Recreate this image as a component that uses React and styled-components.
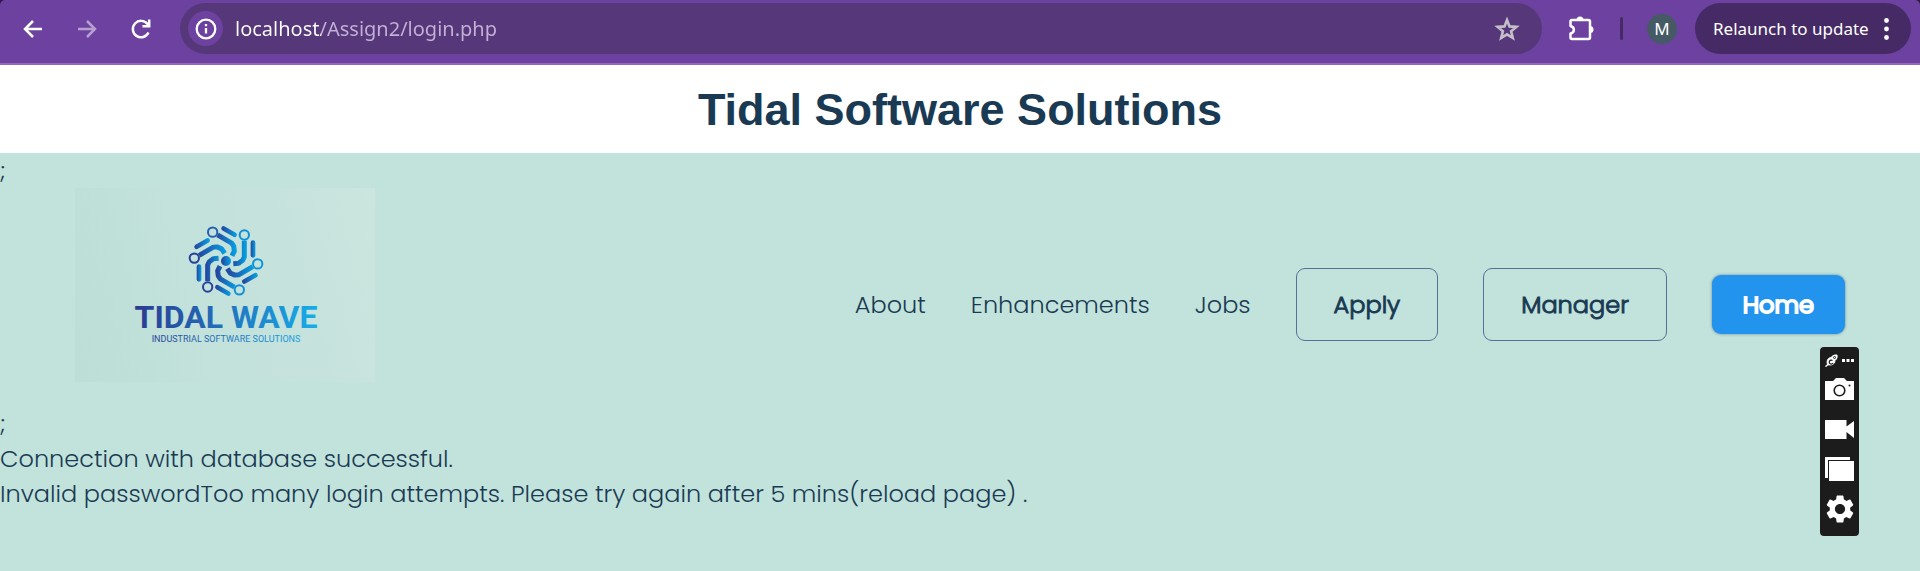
import React from "react";
import styled, { createGlobalStyle } from "styled-components";

const GlobalStyle = createGlobalStyle`
  * { box-sizing: border-box; }
  html, body { margin: 0; }
  body {
    min-height: 100vh;
    background: #c2e3db;
    color: #1a3a54;
    font-family: Poppins, Inter, "Liberation Sans", sans-serif;
    font-size: 24px;
    font-weight: 300;
    line-height: 35px;
  }
  button { font: inherit; color: inherit; border: 0; padding: 0; background: none; cursor: pointer; }
  svg { display: block; }
`;

const ToolbarBack = styled.div`
  background: #2b1a40;
`;

const Toolbar = styled.div`
  display: flex;
  align-items: flex-start;
  height: 65px;
  padding: 3px 9px 0 8px;
  background: #6d419f;
  border-bottom: 2px solid #9069b8;
  border-radius: 5px 5px 0 0;
  color: #fff;
  font-family: "Segoe UI", "Noto Sans", sans-serif;
  font-weight: 400;
`;

const ToolButton = styled.button`
  display: grid;
  place-items: center;
  flex: none;
  width: ${(p) => p.$width || 54}px;
  height: 51px;
  opacity: ${(p) => (p.$dim ? 0.5 : 1)};
`;

const AddressBar = styled.div`
  display: flex;
  align-items: center;
  flex: 1;
  height: 51px;
  margin-left: 14px;
  padding: 0 22px 0 8px;
  border-radius: 26px;
  background: #56387a;
`;

const SiteInfo = styled.button`
  display: grid;
  place-items: center;
  flex: none;
  width: 35px;
  height: 35px;
  margin-right: 12px;
  border-radius: 50%;
  background: #6d419f;
`;

const AddressInput = styled.input`
  flex: 1;
  min-width: 0;
  height: 32px;
  padding: 0;
  border: 0;
  outline: 0;
  font: 400 20px/32px "Segoe UI", "Noto Sans", sans-serif;
  color: transparent;
  background: linear-gradient(90deg, #fff 86px, #c3b2d6 86px);
  background-clip: text;
  -webkit-background-clip: text;
`;

const Divider = styled.span`
  width: 3px;
  height: 23px;
  margin: 14px 24px 0 0;
  border-radius: 2px;
  background: #462a66;
`;

const Avatar = styled.button`
  width: 30px;
  height: 30px;
  margin: 11px 18px 0 0;
  && {
    border-radius: 50%;
    background: #455a64;
    font-size: 17px;
    line-height: 30px;
  }
`;

const Relaunch = styled.button`
  && {
    display: flex;
    align-items: center;
    justify-content: space-between;
    width: 216px;
    height: 51px;
    padding: 0 22px 0 18px;
    border-radius: 26px;
    background: #462a66;
    font-size: 17px;
    white-space: nowrap;
  }
`;

const TitleBar = styled.header`
  display: grid;
  place-items: center;
  height: 88px;
  padding-top: 2px;
  background: #fff;
`;

const Title = styled.h1`
  margin: 0;
  font: 700 45px/52px Arial, "Liberation Sans", sans-serif;
`;

const SiteHeader = styled.div`
  display: flex;
  justify-content: space-between;
  height: 218px;
  padding: 0 75px;
`;

const LogoLink = styled.a`
  flex: none;
  width: 300px;
  height: 194px;
  background: linear-gradient(75deg, #bcded6 0%, #c2e2db 40%, #c6e2dc 70%, #cbe6df 100%);
`;

const Nav = styled.nav`
  display: flex;
  align-items: center;
  gap: 45px;
  padding-top: 14px;
`;

const NavLink = styled.a`
  color: inherit;
  text-decoration: none;
`;

const NavBox = styled(NavLink)`
  padding: 18px 37px;
  border: 1px solid #587099;
  border-radius: 9px;
  -webkit-text-stroke: 1px currentColor;
`;

const HomeBox = styled(NavLink)`
  padding: 12px 31px;
  border-radius: 9px;
  background: #2394ee;
  box-shadow: 0 0 3px rgba(40, 70, 110, 0.6);
  color: #fff;
  -webkit-text-stroke: 2px currentColor;
`;

const Line = styled.p`
  margin: 0;
`;

const Recorder = styled.aside`
  position: fixed;
  top: 347px;
  right: 61px;
  display: flex;
  flex-direction: column;
  align-items: center;
  width: 39px;
  height: 189px;
  padding: 4px 0;
  border-radius: 4px;
  background: #1c1c1c;
  color: #fff;
`;

const RecorderTop = styled.div`
  display: flex;
  align-items: center;
  gap: 4px;
  height: 18px;
`;

const RecorderButton = styled.button`
  display: grid;
  place-items: center;
  width: 39px;
  height: 40px;
`;

const turn = ([x, y], k) => {
  const a = (k * Math.PI) / 3;
  return [x * Math.cos(a) - y * Math.sin(a), x * Math.sin(a) + y * Math.cos(a)];
};

const Swirl = () => (
  <g transform="translate(151 73) scale(.3333)" fill="none" strokeLinejoin="round">
    {[0, 1, 2, 3, 4, 5].map((k) => {
      const ring = turn([55, -78], k);
      const arm = [[55, -61], [55, -12], [50, -2], [38, 7], [22, 8]].map((p) => turn(p, k));
      const bar = [[81, -55], [81, -17]].map((p) => turn(p, k));
      const shades = [arm, bar].map((pts) => pts.map((p) => p[0]));
      return (
        <g key={k}>
          {shades.map((xs, i) => (
            <linearGradient
              key={i}
              id={`shade${k}-${i}`}
              gradientUnits="userSpaceOnUse"
              x1={Math.min(...xs) - 8}
              x2={Math.max(...xs) + 8}
              y1="0"
              y2="0"
            >
              <stop offset="0" stopColor="#27409a" />
              <stop offset="1" stopColor="#05a4e6" />
            </linearGradient>
          ))}
          <path d={`M${arm.map((p) => p.join(" ")).join("L")}`} stroke={`url(#shade${k}-0)`} strokeWidth="15" />
          <path
            d={`M${bar.map((p) => p.join(" ")).join("L")}`}
            stroke={`url(#shade${k}-1)`}
            strokeWidth="14"
            strokeLinecap="round"
          />
          <circle
            cx={ring[0]}
            cy={ring[1]}
            r="14"
            strokeWidth="6"
            stroke={["#0d8fd8", "#0b96dc", "#1590d8", "#27409a", "#27409a", "#2560b0"][k]}
          />
        </g>
      );
    })}
    <circle r="15" fill="url(#core)" />
  </g>
);

const Logo = () => (
  <svg width="300" height="194" viewBox="0 0 300 194" role="img" aria-label="Tidal Wave">
    <defs>
      <linearGradient id="word" gradientUnits="userSpaceOnUse" x1="58" x2="244" y1="0" y2="0">
        <stop offset="0" stopColor="#2b3990" />
        <stop offset="1" stopColor="#17aeea" />
      </linearGradient>
      <linearGradient id="core">
        <stop offset="0" stopColor="#27409a" />
        <stop offset="1" stopColor="#05a4e6" />
      </linearGradient>
    </defs>
    <Swirl />
    <text
      x="151"
      y="140"
      textAnchor="middle"
      fontFamily="Roboto, sans-serif"
      fontSize="32"
      fontWeight="700"
      fill="url(#word)"
    >
      TIDAL WAVE
    </text>
    <text
      x="151"
      y="154"
      textAnchor="middle"
      fontFamily="Roboto, sans-serif"
      fontSize="9"
      fontWeight="400"
      fill="url(#word)"
    >
      INDUSTRIAL SOFTWARE SOLUTIONS
    </text>
  </svg>
);

const Arrow = ({ flip }) => (
  <svg width="20" height="20" viewBox="0 0 20 20" fill="none" stroke="currentColor" strokeWidth="2.5">
    <path d={flip ? "M1 10H18M10 2l8 8-8 8" : "M19 10H2M10 2l-8 8 8 8"} />
  </svg>
);

export default function App() {
  return (
    <>
      <GlobalStyle />
      <ToolbarBack>
        <Toolbar>
          <ToolButton $width={50} aria-label="Back"><Arrow /></ToolButton>
          <ToolButton $width={58} $dim aria-label="Forward"><Arrow flip /></ToolButton>
          <ToolButton $width={50} aria-label="Reload">
            <svg width="22" height="22" viewBox="0 0 22 22" fill="none" stroke="currentColor" strokeWidth="2.5">
              <path d="M18.5 14.5A8.2 8.2 0 1 1 17.5 6L19 8M19.2 1.5V8.2H12.5" />
            </svg>
          </ToolButton>
          <AddressBar>
            <SiteInfo aria-label="Site information">
              <svg width="22" height="22" viewBox="0 0 22 22" fill="none" stroke="#fff">
                <circle cx="11" cy="11" r="9.3" strokeWidth="2.3" />
                <path d="M11 10v5.5M11 6v2.2" strokeWidth="2.3" />
              </svg>
            </SiteInfo>
            <AddressInput aria-label="Address" defaultValue="localhost/Assign2/login.php" />
            <button aria-label="Bookmark this page">
              <svg width="26" height="26" viewBox="0 0 26 26" fill="none" stroke="#c5bfca" strokeWidth="2.6">
                <path d="M13 4l2.5 6.4 6.9.5-5.3 4.4 1.7 6.7-5.8-3.7L7.2 22l1.7-6.7-5.3-4.4 6.9-.5z" />
              </svg>
            </button>
          </AddressBar>
          <ToolButton $width={78} aria-label="Extensions">
            <svg width="28" height="28" viewBox="0 0 28 28">
              <path
                d="M6 5H21.5Q23 5 23 6.5V22.5Q23 24 21.5 24H5Q3.5 24 3.5 22.5V18.5C8 17.5 8 12 3.5 11V6.5Q3.5 5 5 5Z"
                fill="none"
                stroke="#fff"
                strokeWidth="2.5"
                strokeLinejoin="round"
              />
              <path d="M9.5 5a3.5 3.5 0 0 1 7 0zM23 11a3.5 3.5 0 0 1 0 7z" fill="#fff" />
            </svg>
          </ToolButton>
          <Divider />
          <Avatar aria-label="Profile">M</Avatar>
          <Relaunch>
            Relaunch to update
            <svg width="5" height="22" viewBox="0 0 5 22" fill="#fff">
              <circle cx="2.5" cy="2.5" r="2.4" />
              <circle cx="2.5" cy="11" r="2.4" />
              <circle cx="2.5" cy="19.5" r="2.4" />
            </svg>
          </Relaunch>
        </Toolbar>
      </ToolbarBack>
      <TitleBar>
        <Title>Tidal Software Solutions</Title>
      </TitleBar>
      <main>
        <Line>;</Line>
        <SiteHeader>
          <LogoLink href="#home"><Logo /></LogoLink>
          <Nav>
            <NavLink href="#about">About</NavLink>
            <NavLink href="#enhancements">Enhancements</NavLink>
            <NavLink href="#jobs">Jobs</NavLink>
            <NavBox href="#apply">Apply</NavBox>
            <NavBox href="#manager">Manager</NavBox>
            <HomeBox href="#home">Home</HomeBox>
          </Nav>
        </SiteHeader>
        <Line>;</Line>
        <Line>Connection with database successful.</Line>
        <Line>Invalid passwordToo many login attempts. Please try again after 5 mins(reload page) .</Line>
      </main>
      <Recorder aria-label="Screen recorder">
        <RecorderTop>
          <svg width="13" height="13" viewBox="0 0 13 13" fill="none" stroke="#fff">
            <path d="M.5 12.5l2.5-2" strokeWidth="1.5" />
            <path
              d="M2.5 10.5C1.5 7 2.5 4 6 3.5C8 1 10 .8 12 1C12.5 3 12 5 10 6.5C10 10 6.5 12 2.5 10.5Z"
              fill="#fff"
            />
            <circle cx="9.5" cy="3.5" r="1" stroke="#1c1c1c" />
            <path d="M7.5 6.5A2 2 0 1 0 8 9" stroke="#1c1c1c" strokeWidth="1.2" />
          </svg>
          <svg width="12" height="3" viewBox="0 0 12 3" fill="#fff">
            <path d="M0 0h3v3H0zM4.5 0h3v3h-3zM9 0h3v3H9z" />
          </svg>
        </RecorderTop>
        <RecorderButton aria-label="Take screenshot">
          <svg width="29" height="22" viewBox="0 0 29 22">
            <path d="M0 3h8l3-3h8l3 3h7v19H0z" fill="#fff" />
            <circle cx="14.5" cy="12.5" r="5.3" fill="none" stroke="#1c1c1c" strokeWidth="1.6" />
            <circle cx="24.5" cy="7.5" r="1" fill="#1c1c1c" />
          </svg>
        </RecorderButton>
        <RecorderButton aria-label="Record video">
          <svg width="29" height="19" viewBox="0 0 29 19" fill="#fff">
            <path d="M0 0h21.5v6.5L29 1v17l-7.5-6v7H0z" />
          </svg>
        </RecorderButton>
        <RecorderButton aria-label="Gallery">
          <svg width="29" height="24" viewBox="0 0 29 24" fill="#fff">
            <path d="M0 0h25v3H3v18H0zM4 4h25v20H4z" />
          </svg>
        </RecorderButton>
        <RecorderButton aria-label="Settings">
          <svg width="34" height="34" viewBox="0 0 24 24" fill="#fff">
            <path d="M19.14 12.94c.04-.3.06-.61.06-.94 0-.32-.02-.64-.07-.94l2.03-1.58c.18-.14.23-.41.12-.61l-1.92-3.32c-.12-.22-.37-.29-.59-.22l-2.39.96c-.5-.38-1.03-.7-1.62-.94l-.36-2.54c-.04-.24-.24-.41-.48-.41h-3.84c-.24 0-.43.17-.47.41l-.36 2.54c-.59.24-1.13.57-1.62.94l-2.39-.96c-.22-.08-.47 0-.59.22L2.74 8.87c-.12.21-.08.47.12.61l2.03 1.58c-.05.3-.09.63-.09.94s.02.64.07.94l-2.03 1.58c-.18.14-.23.41-.12.61l1.92 3.32c.12.22.37.29.59.22l2.39-.96c.5.38 1.03.7 1.62.94l.36 2.54c.05.24.24.41.48.41h3.84c.24 0 .44-.17.47-.41l.36-2.54c.59-.24 1.13-.56 1.62-.94l2.39.96c.22.08.47 0 .59-.22l1.92-3.32c.12-.22.07-.47-.12-.61l-2.01-1.58zM12 15.6c-1.98 0-3.6-1.62-3.6-3.6s1.62-3.6 3.6-3.6 3.6 1.62 3.6 3.6-1.62 3.6-3.6 3.6z" />
          </svg>
        </RecorderButton>
      </Recorder>
    </>
  );
}
